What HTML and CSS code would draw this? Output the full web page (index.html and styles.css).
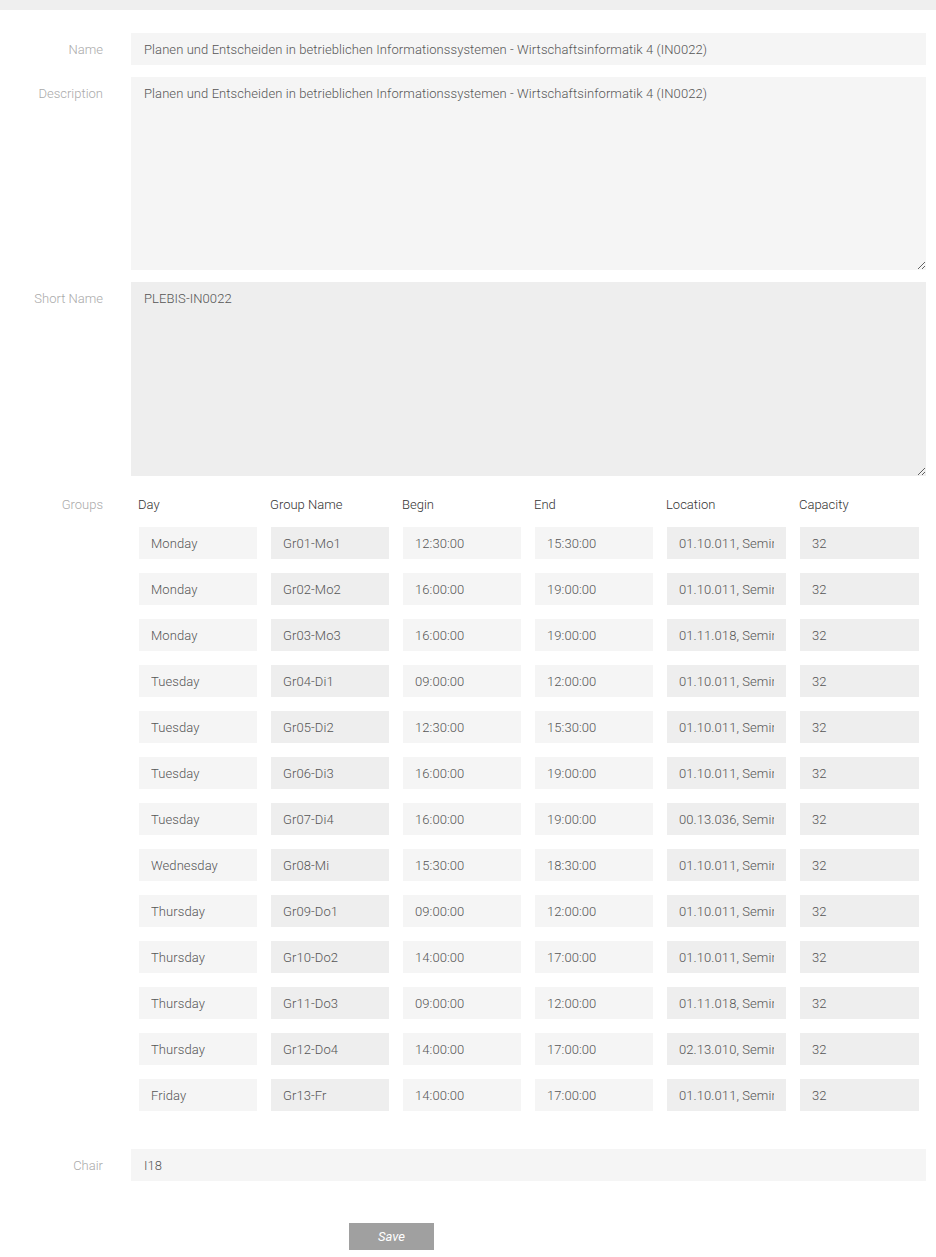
FILE: index.html
```html
<!DOCTYPE html>
<html lang="en">

<head>
    <meta charset="UTF-8">
    <meta name="viewport" content="width=device-width, initial-scale=1.0">
    <title>Edit Course</title>
    <link rel="stylesheet" href="styles.css">
</head>

<body>
    <div class="topbar"></div>

    <form class="course-form">
        <div class="form-row">
            <label class="form-label">Name</label>
            <input class="field" type="text" value="Planen und Entscheiden in betrieblichen Informationssystemen - Wirtschaftsinformatik 4 (IN0022)">
        </div>

        <div class="form-row">
            <label class="form-label">Description</label>
            <textarea class="field area">Planen und Entscheiden in betrieblichen Informationssystemen - Wirtschaftsinformatik 4 (IN0022)</textarea>
        </div>

        <div class="form-row">
            <label class="form-label">Short Name</label>
            <textarea class="field area tall dark">PLEBIS-IN0022</textarea>
        </div>

        <div class="form-row groups-row">
            <label class="form-label">Groups</label>
            <div class="groups">
                <div class="groups-head">
                    <span>Day</span>
                    <span>Group Name</span>
                    <span>Begin</span>
                    <span>End</span>
                    <span>Location</span>
                    <span>Capacity</span>
                </div>
                <div class="groups-body" id="groupsBody">
                    <!-- rows added by script -->
                </div>
            </div>
        </div>

        <div class="form-row">
            <label class="form-label">Chair</label>
            <input class="field" type="text" value="I18">
        </div>

        <div class="actions">
            <button type="button" class="save-btn">Save</button>
        </div>
    </form>

    <script>
        const groups = [
            ['Monday', 'Gr01-Mo1', '12:30:00', '15:30:00', '01.10.011, Seminarraum'],
            ['Monday', 'Gr02-Mo2', '16:00:00', '19:00:00', '01.10.011, Seminarraum'],
            ['Monday', 'Gr03-Mo3', '16:00:00', '19:00:00', '01.11.018, Seminarraum'],
            ['Tuesday', 'Gr04-Di1', '09:00:00', '12:00:00', '01.10.011, Seminarraum'],
            ['Tuesday', 'Gr05-Di2', '12:30:00', '15:30:00', '01.10.011, Seminarraum'],
            ['Tuesday', 'Gr06-Di3', '16:00:00', '19:00:00', '01.10.011, Seminarraum'],
            ['Tuesday', 'Gr07-Di4', '16:00:00', '19:00:00', '00.13.036, Seminarraum'],
            ['Wednesday', 'Gr08-Mi', '15:30:00', '18:30:00', '01.10.011, Seminarraum'],
            ['Thursday', 'Gr09-Do1', '09:00:00', '12:00:00', '01.10.011, Seminarraum'],
            ['Thursday', 'Gr10-Do2', '14:00:00', '17:00:00', '01.10.011, Seminarraum'],
            ['Thursday', 'Gr11-Do3', '09:00:00', '12:00:00', '01.11.018, Seminarraum'],
            ['Thursday', 'Gr12-Do4', '14:00:00', '17:00:00', '02.13.010, Seminarraum'],
            ['Friday', 'Gr13-Fr', '14:00:00', '17:00:00', '01.10.011, Seminarraum']
        ];

        // light cells for day/begin/end, darker for the rest
        const kinds = ['', 'dark', '', '', 'dark', 'dark'];
        const body = document.getElementById('groupsBody');

        groups.forEach(function (g) {
            const values = g.concat(['32']);
            values.forEach(function (v, i) {
                const input = document.createElement('input');
                input.type = 'text';
                input.className = 'cell ' + kinds[i];
                input.value = v;
                body.appendChild(input);
            });
        });
    </script>
</body>

</html>
```

FILE: styles.css
```css
body {
    font-family: Roboto, 'Liberation Sans', sans-serif;
    font-weight: 300;
    font-size: 13px;
    margin: 0;
    padding: 0;
    background-color: #fff;
    color: #555;
}

.topbar {
    height: 10px;
    background-color: #efefef;
}

.course-form {
    padding: 23px 10px 0 0;
    display: flex;
    flex-direction: column;
    gap: 12px;
}

.form-row {
    display: flex;
    align-items: flex-start;
}

.form-label {
    flex: 0 0 131px;
    box-sizing: border-box;
    padding: 9px 28px 0 0;
    line-height: 16px;
    text-align: right;
    color: #aaa;
}

.field {
    flex: 1;
    box-sizing: border-box;
    height: 32px;
    border: none;
    outline: none;
    padding: 1px 13px 0;
    background-color: #f5f5f5;
    color: #555;
    font: inherit;
    letter-spacing: 0.08px;
}

.area {
    height: 193px;
    padding: 9px 13px;
    line-height: 16px;
    resize: vertical;
}

.area.tall {
    height: 194px;
}

.dark {
    background-color: #eee;
}

.groups-row {
    padding-bottom: 26px;
}

.groups {
    flex: 1;
    padding-left: 8px;
}

.groups-head,
.groups-body {
    display: grid;
    grid-template-columns: 118px 118px 118px 118px 119px 119px;
    column-gap: 14px;
}

.groups-head {
    margin-bottom: 7px;
}

.groups-head span {
    padding: 9px 0 7px;
    line-height: 16px;
    color: #333;
    margin-left: -1px;
}

.groups-body {
    row-gap: 14px;
}

.cell {
    box-sizing: border-box;
    width: 100%;
    height: 32px;
    border: none;
    outline: none;
    padding: 0 12px;
    background-color: #f5f5f5;
    color: #555;
    font: inherit;
    letter-spacing: 0.08px;
}

.cell.dark {
    background-color: #eee;
}

.actions {
    padding: 30px 0 0 349px;
}

.save-btn {
    width: 85px;
    height: 27px;
    border: none;
    background-color: #a0a0a0;
    color: #fff;
    font: inherit;
    font-style: italic;
    font-weight: 400;
    cursor: pointer;
}
```
